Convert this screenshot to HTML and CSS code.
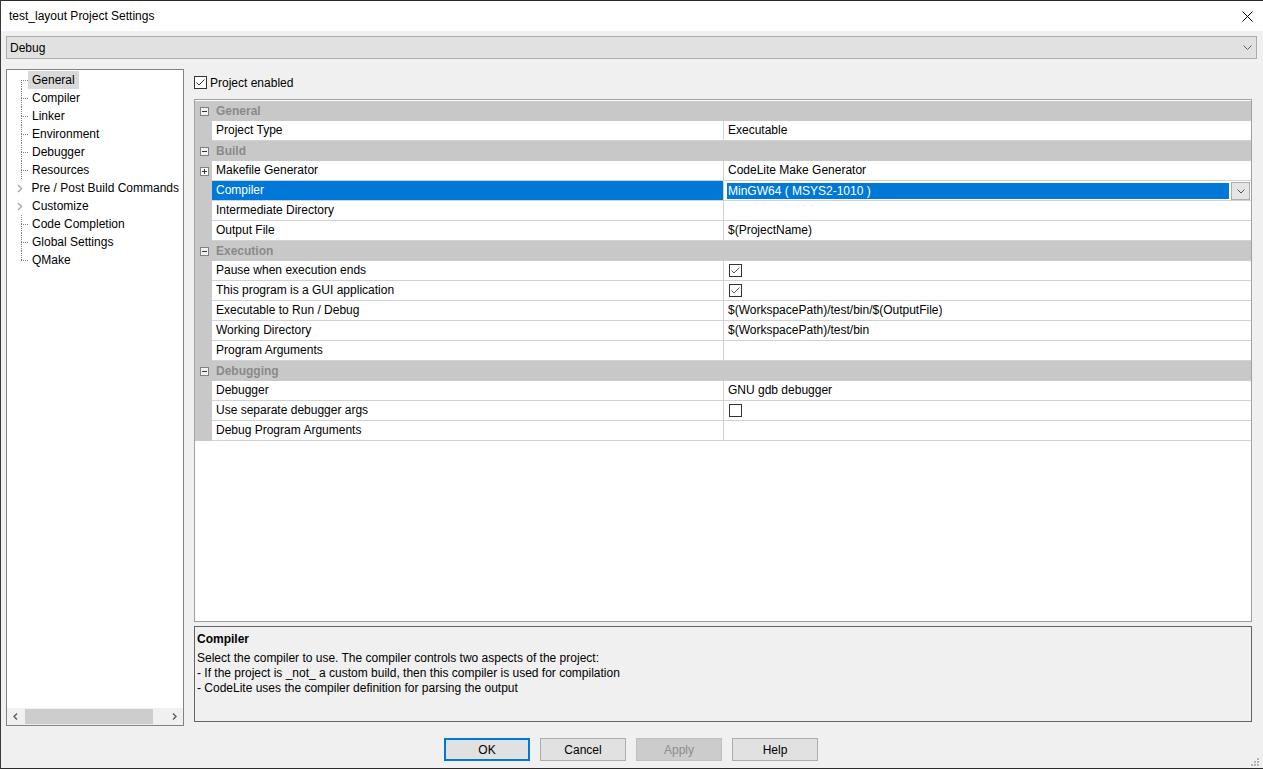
FILE: index.html
```html
<!DOCTYPE html>
<html lang="en">
<head>
    <meta charset="UTF-8">
    <meta name="viewport" content="width=device-width, initial-scale=1.0">
    <title>test_layout Project Settings</title>
    <link rel="stylesheet" href="styles.css">
</head>
<body>
    <div class="dialog">
        <div class="titlebar">
            <span class="title">test_layout Project Settings</span>
            <svg class="close" width="11" height="11" viewBox="0 0 11 11">
                <path d="M0.5 0.5 L10.5 10.5 M10.5 0.5 L0.5 10.5" stroke="#000" stroke-width="1" fill="none"/>
            </svg>
        </div>

        <div class="dialog-body">
            <div class="config-select">
                <span>Debug</span>
                <svg width="9" height="5" viewBox="0 0 9 5">
                    <polyline points="0.5,0.5 4.5,4.5 8.5,0.5" stroke="#606060" stroke-width="1" fill="none"/>
                </svg>
            </div>

            <div class="content">
                <div class="tree">
                    <ul class="tree-list">
                        <li class="node first"><span class="twig"><i class="up"></i><i class="down"></i></span><span class="node-label selected">General</span></li>
                        <li class="node"><span class="twig"><i class="up"></i><i class="down"></i></span><span class="node-label">Compiler</span></li>
                        <li class="node"><span class="twig"><i class="up"></i><i class="down"></i></span><span class="node-label">Linker</span></li>
                        <li class="node"><span class="twig"><i class="up"></i><i class="down"></i></span><span class="node-label">Environment</span></li>
                        <li class="node"><span class="twig"><i class="up"></i><i class="down"></i></span><span class="node-label">Debugger</span></li>
                        <li class="node"><span class="twig"><i class="up"></i><i class="down"></i></span><span class="node-label">Resources</span></li>
                        <li class="node"><span class="expander"><svg width="6" height="9" viewBox="0 0 6 9"><polyline points="1,1 4.5,4.5 1,8" stroke="#a6a6a6" stroke-width="1.4" fill="none"/></svg></span><span class="node-label">Pre / Post Build Commands</span></li>
                        <li class="node"><span class="expander"><svg width="6" height="9" viewBox="0 0 6 9"><polyline points="1,1 4.5,4.5 1,8" stroke="#a6a6a6" stroke-width="1.4" fill="none"/></svg></span><span class="node-label">Customize</span></li>
                        <li class="node"><span class="twig"><i class="up"></i><i class="down"></i></span><span class="node-label">Code Completion</span></li>
                        <li class="node"><span class="twig"><i class="up"></i><i class="down"></i></span><span class="node-label">Global Settings</span></li>
                        <li class="node last"><span class="twig"><i class="up"></i><i class="down"></i></span><span class="node-label">QMake</span></li>
                    </ul>
                    <div class="hscroll">
                        <span class="arrow">
                            <svg width="5" height="7" viewBox="0 0 5 7"><polyline points="4,0.5 1,3.5 4,6.5" stroke="#606060" stroke-width="1.5" fill="none"/></svg>
                        </span>
                        <span class="thumb"></span>
                        <span class="track"></span>
                        <span class="arrow">
                            <svg width="5" height="7" viewBox="0 0 5 7"><polyline points="1,0.5 4,3.5 1,6.5" stroke="#606060" stroke-width="1.5" fill="none"/></svg>
                        </span>
                    </div>
                </div>

                <div class="settings">
                    <div class="enable-row">
                        <span class="checkbox">
                            <svg width="11" height="11" viewBox="0 0 11 11"><polyline points="1.5,5.5 4,8 9.5,2.5" stroke="#333" stroke-width="1" fill="none"/></svg>
                        </span>
                        <span>Project enabled</span>
                    </div>

                    <div class="grid">
                        <div class="category">
                            <span class="gutter"><svg width="9" height="9" viewBox="0 0 9 9"><rect x="0.5" y="0.5" width="8" height="8" fill="#f2f2f2" stroke="#808080"/><path d="M2 4.5 H7" stroke="#333"/></svg></span>
                            <span class="cat-name">General</span>
                        </div>
                        <div class="prop">
                            <span class="gutter"></span>
                            <span class="name">Project Type</span>
                            <span class="value">Executable</span>
                        </div>

                        <div class="category">
                            <span class="gutter"><svg width="9" height="9" viewBox="0 0 9 9"><rect x="0.5" y="0.5" width="8" height="8" fill="#f2f2f2" stroke="#808080"/><path d="M2 4.5 H7" stroke="#333"/></svg></span>
                            <span class="cat-name">Build</span>
                        </div>
                        <div class="prop">
                            <span class="gutter"><svg width="9" height="9" viewBox="0 0 9 9"><rect x="0.5" y="0.5" width="8" height="8" fill="#fafafa" stroke="#808080"/><path d="M2 4.5 H7 M4.5 2 V7" stroke="#333"/></svg></span>
                            <span class="name">Makefile Generator</span>
                            <span class="value">CodeLite Make Generator</span>
                        </div>
                        <div class="prop selected">
                            <span class="gutter"></span>
                            <span class="name">Compiler</span>
                            <span class="value editing">
                                <span class="edit-text">MinGW64 ( MSYS2-1010 )</span>
                                <span class="drop-btn">
                                    <svg width="8" height="5" viewBox="0 0 8 5"><polyline points="0.5,0.5 4,4 7.5,0.5" stroke="#505050" stroke-width="1" fill="none"/></svg>
                                </span>
                            </span>
                        </div>
                        <div class="prop">
                            <span class="gutter"></span>
                            <span class="name">Intermediate Directory</span>
                            <span class="value"></span>
                        </div>
                        <div class="prop">
                            <span class="gutter"></span>
                            <span class="name">Output File</span>
                            <span class="value">$(ProjectName)</span>
                        </div>

                        <div class="category">
                            <span class="gutter"><svg width="9" height="9" viewBox="0 0 9 9"><rect x="0.5" y="0.5" width="8" height="8" fill="#f2f2f2" stroke="#808080"/><path d="M2 4.5 H7" stroke="#333"/></svg></span>
                            <span class="cat-name">Execution</span>
                        </div>
                        <div class="prop">
                            <span class="gutter"></span>
                            <span class="name">Pause when execution ends</span>
                            <span class="value"><span class="checkbox small"><svg width="11" height="11" viewBox="0 0 11 11"><polyline points="1.5,5.5 4,8 9.5,2.5" stroke="#5a5a5a" stroke-width="1" fill="none"/></svg></span></span>
                        </div>
                        <div class="prop">
                            <span class="gutter"></span>
                            <span class="name">This program is a GUI application</span>
                            <span class="value"><span class="checkbox small"><svg width="11" height="11" viewBox="0 0 11 11"><polyline points="1.5,5.5 4,8 9.5,2.5" stroke="#5a5a5a" stroke-width="1" fill="none"/></svg></span></span>
                        </div>
                        <div class="prop">
                            <span class="gutter"></span>
                            <span class="name">Executable to Run / Debug</span>
                            <span class="value">$(WorkspacePath)/test/bin/$(OutputFile)</span>
                        </div>
                        <div class="prop">
                            <span class="gutter"></span>
                            <span class="name">Working Directory</span>
                            <span class="value">$(WorkspacePath)/test/bin</span>
                        </div>
                        <div class="prop">
                            <span class="gutter"></span>
                            <span class="name">Program Arguments</span>
                            <span class="value"></span>
                        </div>

                        <div class="category">
                            <span class="gutter"><svg width="9" height="9" viewBox="0 0 9 9"><rect x="0.5" y="0.5" width="8" height="8" fill="#f2f2f2" stroke="#808080"/><path d="M2 4.5 H7" stroke="#333"/></svg></span>
                            <span class="cat-name">Debugging</span>
                        </div>
                        <div class="prop">
                            <span class="gutter"></span>
                            <span class="name">Debugger</span>
                            <span class="value">GNU gdb debugger</span>
                        </div>
                        <div class="prop">
                            <span class="gutter"></span>
                            <span class="name">Use separate debugger args</span>
                            <span class="value"><span class="checkbox small"></span></span>
                        </div>
                        <div class="prop">
                            <span class="gutter"></span>
                            <span class="name">Debug Program Arguments</span>
                            <span class="value"></span>
                        </div>
                    </div>

                    <div class="description">
                        <p class="desc-title">Compiler</p>
                        <p>Select the compiler to use. The compiler controls two aspects of the project:</p>
                        <p>- If the project is _not_ a custom build, then this compiler is used for compilation</p>
                        <p>- CodeLite uses the compiler definition for parsing the output</p>
                    </div>
                </div>
            </div>

            <div class="buttons">
                <button class="default">OK</button>
                <button>Cancel</button>
                <button disabled>Apply</button>
                <button>Help</button>
            </div>
        </div>

        <svg class="grip" width="9" height="9" viewBox="0 0 9 9">
            <rect x="6" y="0" width="2" height="2" fill="#b4b4b4"/>
            <rect x="3" y="3" width="2" height="2" fill="#b4b4b4"/>
            <rect x="6" y="3" width="2" height="2" fill="#b4b4b4"/>
            <rect x="0" y="6" width="2" height="2" fill="#b4b4b4"/>
            <rect x="3" y="6" width="2" height="2" fill="#b4b4b4"/>
            <rect x="6" y="6" width="2" height="2" fill="#b4b4b4"/>
        </svg>
    </div>
</body>
</html>
```

FILE: styles.css
```css
* {
    margin: 0;
    padding: 0;
    box-sizing: border-box;
}

body {
    font-family: "Liberation Sans", Arial, sans-serif;
    font-size: 12px;
    color: #000;
    background-color: #f0f0f0;
    width: 1263px;
    height: 769px;
    overflow: hidden;
}

.dialog {
    position: relative;
    width: 1263px;
    height: 769px;
    background-color: #f0f0f0;
    border-top: 1px solid #2b2b2b;
    border-left: 1px solid #3a3a3a;
    border-bottom: 1px solid #2b2b2b;
    display: flex;
    flex-direction: column;
}

.titlebar {
    height: 30px;
    background-color: #fff;
    display: flex;
    align-items: center;
    justify-content: space-between;
    padding: 0 10px 0 8px;
}

.title {
    font-size: 12px;
}

.dialog-body {
    padding: 5px 6px 0 5px;
    display: flex;
    flex-direction: column;
}

.config-select {
    height: 23px;
    background-color: #e1e1e1;
    border: 1px solid #adadad;
    display: flex;
    align-items: center;
    justify-content: space-between;
    padding: 0 4px 0 3px;
}

.content {
    display: flex;
    margin-top: 10px;
    height: 658px;
}

/* tree */

.tree {
    width: 178px;
    height: 657px;
    background-color: #fff;
    border: 1px solid #828282;
    display: flex;
    flex-direction: column;
}

.tree-list {
    list-style: none;
    flex: 1;
    padding-top: 1px;
}

.node {
    display: flex;
    height: 18px;
}

.twig {
    width: 7px;
    margin-left: 14px;
    display: flex;
    flex-direction: column;
}

.twig i {
    display: block;
    flex: 1;
    border-left: 1px dotted #808080;
}

.twig .down {
    border-top: 1px dotted #808080;
}

.first .twig .up {
    border-left: none;
}

.last .twig .down {
    border-left: none;
}

.expander {
    width: 11px;
    margin-left: 10px;
    display: flex;
    align-items: center;
}

.node-label {
    line-height: 18px;
    padding: 0 4px;
    white-space: nowrap;
}

.node-label.selected {
    background-color: #d9d9d9;
}

.hscroll {
    height: 17px;
    background-color: #f0f0f0;
    display: flex;
    align-items: center;
}

.hscroll .arrow {
    width: 17px;
    height: 17px;
    display: flex;
    align-items: center;
    justify-content: center;
}

.hscroll .thumb {
    width: 128px;
    height: 15px;
    margin-left: 1px;
    background-color: #cdcdcd;
}

.hscroll .track {
    flex: 1;
}

/* right side */

.settings {
    width: 1058px;
    margin-left: 10px;
    display: flex;
    flex-direction: column;
}

.enable-row {
    margin-top: 7px;
    height: 13px;
    display: flex;
    align-items: center;
    gap: 3px;
}

.checkbox {
    width: 13px;
    height: 13px;
    border: 1px solid #333;
    background-color: #fff;
    display: inline-flex;
    align-items: center;
    justify-content: center;
}

.checkbox.small {
    margin-left: 1px;
}

.grid {
    margin-top: 10px;
    height: 523px;
    background-color: #fff;
    border: 1px solid #a0a0a0;
    padding-top: 1px;
}

.category,
.prop {
    display: flex;
    height: 20px;
}

.gutter {
    width: 17px;
    background-color: #c8c8c8;
    display: flex;
    align-items: center;
    padding-left: 5px;
}

.category {
    background-color: #c8c8c8;
}

.cat-name {
    padding-left: 4px;
    line-height: 20px;
    font-weight: bold;
    color: #8a8a8a;
}

.prop .name {
    width: 511px;
    padding-left: 4px;
    line-height: 19px;
    border-bottom: 1px solid #d2d2d2;
    white-space: nowrap;
}

.prop .value {
    flex: 1;
    padding-left: 4px;
    line-height: 19px;
    border-left: 1px solid #d2d2d2;
    border-bottom: 1px solid #d2d2d2;
    display: flex;
    align-items: center;
    white-space: nowrap;
}

.prop.selected .name {
    background-color: #0078d7;
    color: #fff;
}

.prop .value.editing {
    padding-left: 0;
    align-items: flex-start;
}

.edit-text {
    width: 502px;
    height: 16px;
    margin: 2px 2px 0 3px;
    padding-left: 1px;
    line-height: 16px;
    background-color: #0078d7;
    color: #fff;
}

.drop-btn {
    width: 19px;
    height: 18px;
    margin-top: 1px;
    background-color: #e5e5e5;
    border: 1px solid #adadad;
    display: flex;
    align-items: center;
    justify-content: center;
}

.description {
    margin-top: 4px;
    height: 96px;
    border: 1px solid #646464;
    background-color: #f0f0f0;
    padding: 5px 2px;
    line-height: 15px;
}

.desc-title {
    font-weight: bold;
    margin-bottom: 4px;
}

/* buttons */

.buttons {
    margin-top: 11px;
    padding-left: 438px;
    display: flex;
    gap: 10px;
}

button {
    width: 86px;
    height: 23px;
    font-family: "Liberation Sans", Arial, sans-serif;
    font-size: 12px;
    color: #000;
    background-color: #e1e1e1;
    border: 1px solid #adadad;
}

button.default {
    border: 2px solid #0078d7;
}

button:disabled {
    background-color: #cccccc;
    border-color: #bfbfbf;
    color: #8c8c8c;
}

.grip {
    position: absolute;
    right: 3px;
    bottom: 1px;
}
```
